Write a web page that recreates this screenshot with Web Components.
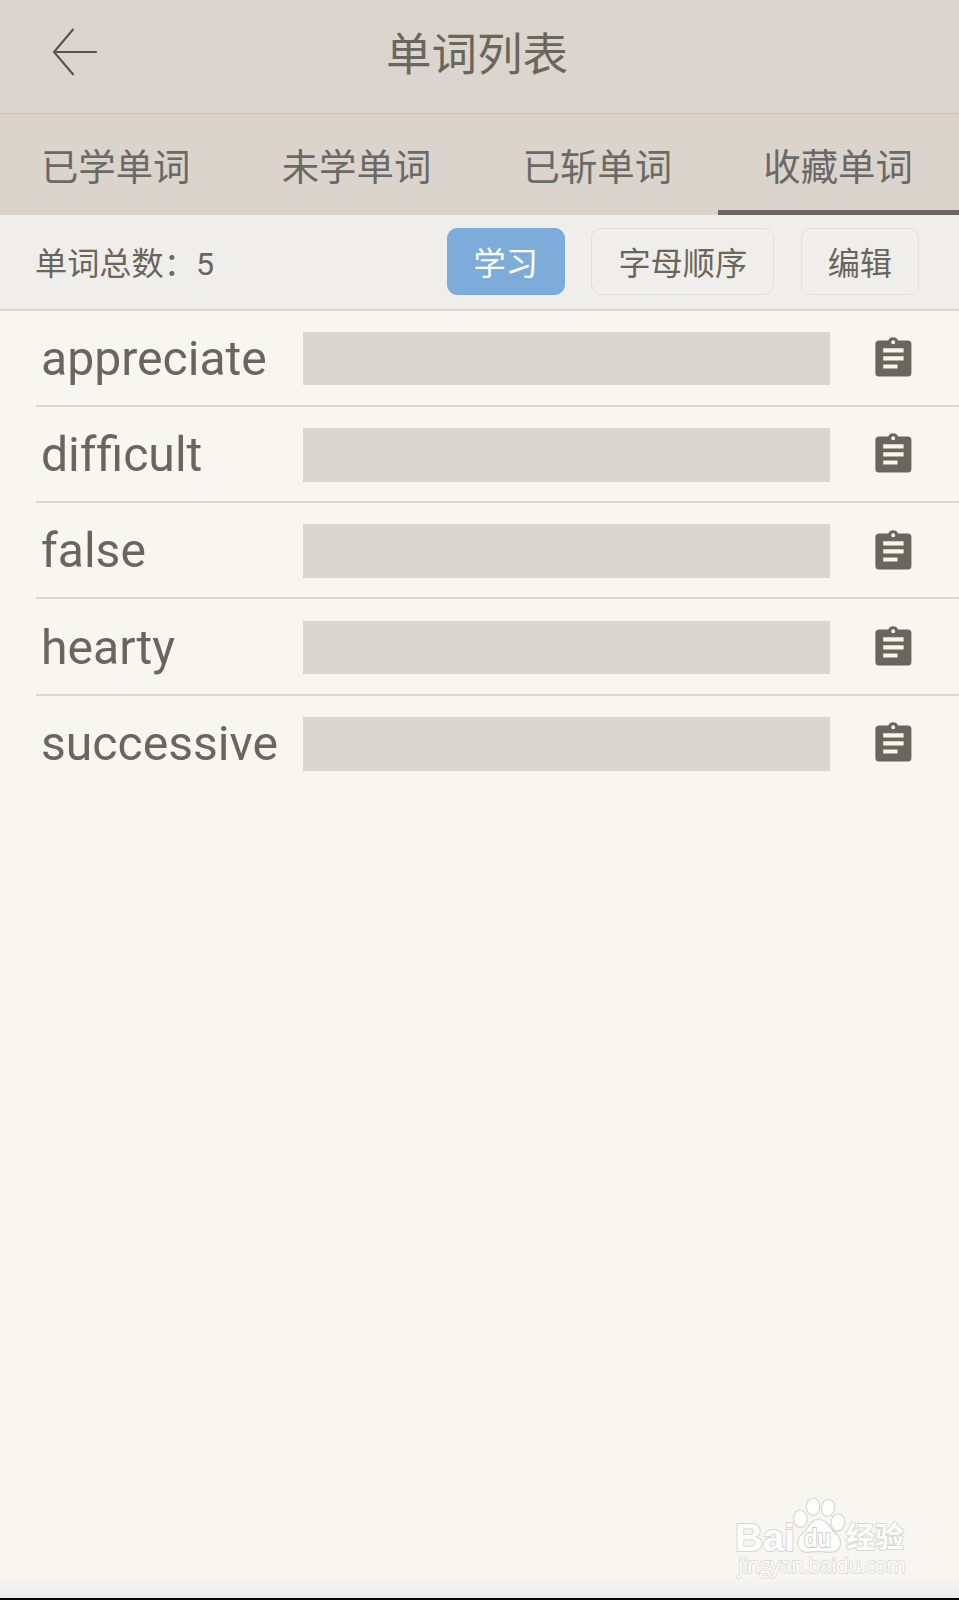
<!DOCTYPE html>
<html lang="zh-CN">
<head>
<meta charset="UTF-8">
<title>单词列表</title>
<style>
  body {
    margin: 0;
    background: #f7f6f1;
    color: #69665c;
    font-family: Roboto, "Noto Sans CJK SC", sans-serif;
  }

  /* keeps the first f out of the ligature */
  .part {
    display: inline-block;
  }
</style>
</head>
<body>
<word-app>
  <app-header slot="header">单词列表</app-header>
  <tab-bar slot="header">
    <tab-item>已学单词</tab-item>
    <tab-item>未学单词</tab-item>
    <tab-item>已斩单词</tab-item>
    <tab-item active>收藏单词</tab-item>
  </tab-bar>
  <tool-bar slot="header">
    <span slot="label">单词总数：5</span>
    <tool-button primary>学习</tool-button>
    <tool-button>字母顺序</tool-button>
    <tool-button>编辑</tool-button>
  </tool-bar>
  <word-row>appreciate</word-row>
  <word-row>dif<span class="part">ficult</span></word-row>
  <word-row>false</word-row>
  <word-row>hearty</word-row>
  <word-row>successive</word-row>
  <site-watermark slot="watermark"></site-watermark>
</word-app>

<script>
class WordApp extends HTMLElement {
  connectedCallback() {
    this.attachShadow({ mode: 'open' });
    this.shadowRoot.innerHTML = `
      <style>
        :host {
          display: flex;
          flex-direction: column;
          position: relative;
          height: 1600px;
          overflow: hidden;
          box-sizing: border-box;
          border-bottom: 2px solid #000;
        }

        main {
          flex: 1;
          background: linear-gradient(to bottom, transparent calc(100% - 20px), #ecece8);
        }
      </style>
      <slot name="header"></slot>
      <main><slot></slot></main>
      <slot name="watermark"></slot>
    `;
  }
}

class AppHeader extends HTMLElement {
  connectedCallback() {
    this.attachShadow({ mode: 'open' });
    this.shadowRoot.innerHTML = `
      <style>
        :host {
          display: grid;
          grid-template-columns: 150px 1fr 150px;
          align-items: center;
          height: 114px;
          box-sizing: border-box;
          border-bottom: 1px solid #cfc5ba;
          background: #dcd4ce;
        }

        svg {
          display: block;
          margin: -9px 0 0 51px;
        }

        h1 {
          margin: -2px 0 0;
          padding-right: 5px;
          text-align: center;
          font-size: 45.5px;
          font-weight: 400;
          line-height: 60px;
        }
      </style>
      <svg width="46" height="48" viewBox="0 0 46 48" fill="none" stroke="#59534c" stroke-width="2.1" stroke-linecap="round">
        <path d="M22 1.5 3 24l19 22.3M3 24h42"/>
      </svg>
      <h1><slot></slot></h1>
    `;
  }
}

class TabBar extends HTMLElement {
  connectedCallback() {
    this.attachShadow({ mode: 'open' });
    this.shadowRoot.innerHTML = `
      <style>
        :host {
          display: grid;
          grid-template-columns: repeat(4, 240.8px);
          height: 101px;
          background: linear-gradient(#dcd3ca, #dbd4cd 12px);
        }

        ::slotted(*) {
          margin-left: -4.2px;
          margin-right: 4.2px;
        }
      </style>
      <slot></slot>
    `;
  }
}

class TabItem extends HTMLElement {
  connectedCallback() {
    this.attachShadow({ mode: 'open' });
    this.shadowRoot.innerHTML = `
      <style>
        :host {
          display: flex;
          align-items: center;
          justify-content: center;
          box-sizing: border-box;
          border-bottom: 5px solid transparent;
          padding: 11px 1px 0 0;
          color: #6a6966;
          font-size: 37.4px;
          line-height: 50px;
        }

        :host([active]) {
          border-color: #686764;
        }
      </style>
      <slot></slot>
    `;
  }
}

class ToolBar extends HTMLElement {
  connectedCallback() {
    this.attachShadow({ mode: 'open' });
    this.shadowRoot.innerHTML = `
      <style>
        :host {
          display: flex;
          align-items: center;
          height: 95.5px;
          box-sizing: border-box;
          padding: 0 40px 0 35px;
          border-bottom: 2px solid #dbd9d1;
          background: #efeeeb;
          font-size: 32.2px;
          line-height: 44px;
        }

        ::slotted([slot="label"]) {
          padding-top: 4px;
        }

        .actions {
          display: flex;
          gap: 26.5px;
          margin-left: auto;
        }
      </style>
      <slot name="label"></slot>
      <div class="actions"><slot></slot></div>
    `;
  }
}

class ToolButton extends HTMLElement {
  connectedCallback() {
    this.attachShadow({ mode: 'open' });
    this.shadowRoot.innerHTML = `
      <style>
        :host {
          display: flex;
          align-items: center;
          height: 67px;
          box-sizing: border-box;
          padding: 4px 26px 0;
          border: 1px solid #e0dfdb;
          border-radius: 10px;
          white-space: nowrap;
        }

        :host([primary]) {
          border-color: #7eacda;
          background: #7eacda;
          color: #fff;
        }
      </style>
      <slot></slot>
    `;
  }
}

class WordRow extends HTMLElement {
  connectedCallback() {
    this.attachShadow({ mode: 'open' });
    this.shadowRoot.innerHTML = `
      <style>
        :host {
          display: grid;
          grid-template-columns: 262.3px 526.5px 1fr;
          align-items: center;
          height: 96.3px;
          box-sizing: border-box;
          margin-left: 35.5px;
          padding: 2px 0 0 5.5px;
          border-bottom: 2px solid #d9d8d4;
        }

        :host(:last-of-type) {
          border-color: transparent;
        }

        .word {
          font-size: 48.1px;
          line-height: 60px;
        }

        .mask {
          height: 53.5px;
          background: #dad7d0;
        }

        svg {
          display: block;
          margin: -4px 0 0 45.6px;
        }
      </style>
      <span class="word"><slot></slot></span>
      <div class="mask"></div>
      <svg width="37" height="41" viewBox="0 0 37 41">
        <path fill="#69665b" fill-rule="evenodd" d="M4 4.4h9.2a5.4 5.4 0 0 1 9.8 0h9.8q3.6 0 3.6 3.6v29q0 3.6-3.6 3.6H4Q.4 40.6.4 37V8Q.4 4.4 4 4.4ZM18.2 4.3a2 2 0 1 0 0 4 2 2 0 0 0 0-4ZM8.2 12.2v4.2h20.4v-4.2ZM8.2 20.3v4.2h20.4v-4.2ZM8.2 28.4v4.2h14.3v-4.2Z"/>
      </svg>
    `;
  }
}

class SiteWatermark extends HTMLElement {
  connectedCallback() {
    this.attachShadow({ mode: 'open' });
    this.shadowRoot.innerHTML = `
      <style>
        :host {
          display: block;
          position: absolute;
          right: 45px;
          bottom: 16px;
        }

        svg {
          display: block;
        }

        text {
          paint-order: stroke;
        }
      </style>
      <svg width="180" height="84" viewBox="0 0 180 84" fill="#fdfdfb" stroke="#d9d7d3" stroke-width="2" stroke-linejoin="round">
        <text x="1" y="52.5" textLength="60" lengthAdjust="spacingAndGlyphs" font-family="Liberation Sans" font-weight="700" font-size="39">Bai</text>
        <g stroke-width="1.2">
          <ellipse cx="66.3" cy="20.8" rx="6.7" ry="8.8" transform="rotate(-6 66.3 20.8)"/>
          <ellipse cx="79" cy="8.8" rx="6.7" ry="8.6"/>
          <ellipse cx="94" cy="9.8" rx="6.7" ry="8.6" transform="rotate(10 94 9.8)"/>
          <ellipse cx="103.8" cy="24.5" rx="6.9" ry="8.6" transform="rotate(5 103.8 24.5)"/>
          <path d="M84.5 21.5c-7 0-9 6-13 11-4 4-8 7-8 13 0 5 4 8.8 9 8.8 4 0 8-1 12-1s8 1 12 1c6 0 10-3.8 10-9.3 0-6-4-9-8-13-4-5-7-10.500-14-10.500Z"/>
        </g>
        <text x="70" y="48.7" textLength="27" lengthAdjust="spacingAndGlyphs" font-family="Liberation Sans" font-weight="700" font-size="25" stroke="#cfcdc9">du</text>
        <text x="112" y="50.3" font-family="Noto Sans CJK SC" font-weight="700" font-size="29">经验</text>
        <text x="4" y="74.8" textLength="168" font-family="Open Sans" font-size="21" stroke-width="1.5">jingyan.baidu.com</text>
      </svg>
    `;
  }
}

customElements.define('word-app', WordApp);
customElements.define('app-header', AppHeader);
customElements.define('tab-bar', TabBar);
customElements.define('tab-item', TabItem);
customElements.define('tool-bar', ToolBar);
customElements.define('tool-button', ToolButton);
customElements.define('word-row', WordRow);
customElements.define('site-watermark', SiteWatermark);
</script>
</body>
</html>
